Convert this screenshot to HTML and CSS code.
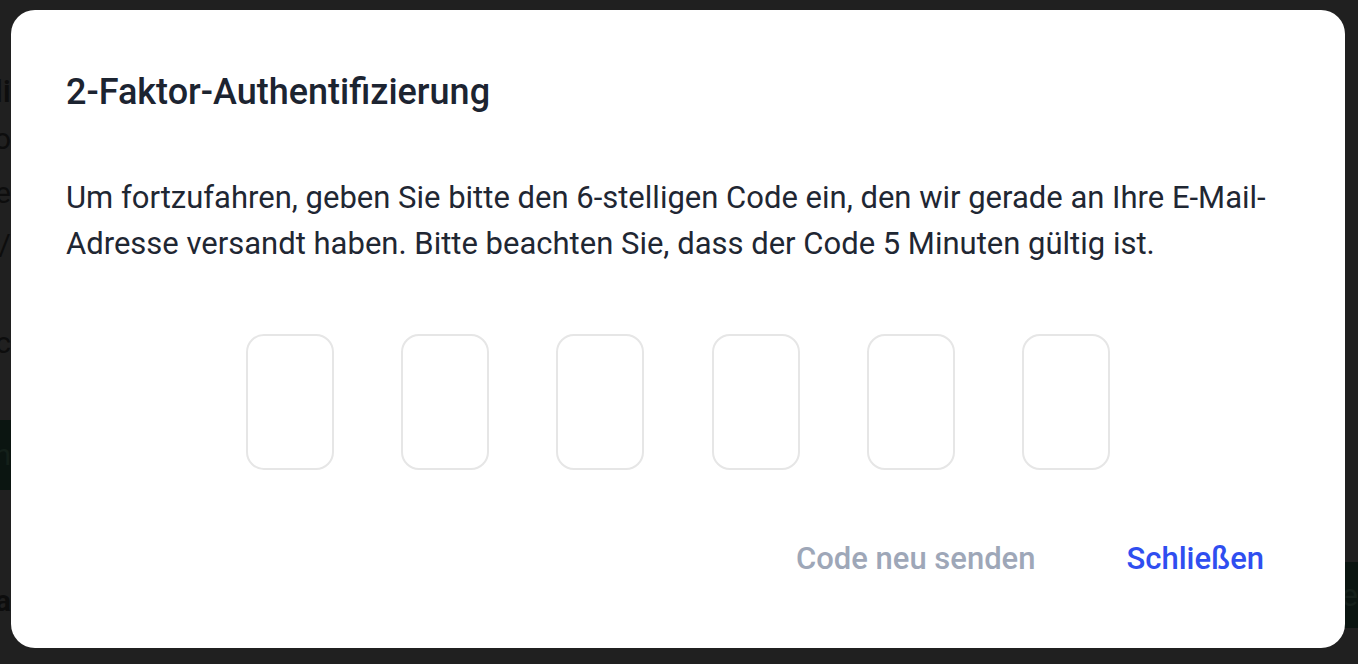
FILE: index.html
```html
<!DOCTYPE html>
<html lang="de">
<head>
<meta charset="utf-8">
<title>2-Faktor-Authentifizierung</title>
<link rel="stylesheet" href="styles.css">
</head>
<body>
<div class="backdrop-page" aria-hidden="true">
  <div class="bg-line bg-title">Anmeldung li</div>
  <div class="bg-line bg-l2">Passwort o</div>
  <div class="bg-line bg-l3">Name e</div>
  <div class="bg-line bg-l4">Pr/</div>
  <div class="bg-line bg-l5">Kontc</div>
  <div class="bg-btn">Anmelden</div>
  <div class="bg-line bg-l6">Fra</div>
</div>
<div class="bg-right" aria-hidden="true"><span>e</span></div>
<div class="overlay">
  <div class="modal" role="dialog" aria-labelledby="mtitle">
    <h2 class="modal-title" id="mtitle">2-Faktor-Authentifizierung</h2>
    <p class="modal-text">Um fortzufahren, geben Sie bitte den 6-stelligen Code ein, den wir gerade an Ihre E-Mail-Adresse versandt haben. Bitte beachten Sie, dass der Code 5 Minuten gültig ist.</p>
    <div class="code-row">
      <input class="code-box" type="text" maxlength="1" aria-label="Ziffer 1">
      <input class="code-box" type="text" maxlength="1" aria-label="Ziffer 2">
      <input class="code-box" type="text" maxlength="1" aria-label="Ziffer 3">
      <input class="code-box" type="text" maxlength="1" aria-label="Ziffer 4">
      <input class="code-box" type="text" maxlength="1" aria-label="Ziffer 5">
      <input class="code-box" type="text" maxlength="1" aria-label="Ziffer 6">
    </div>
    <div class="modal-actions">
      <button class="btn btn-muted" type="button">Code neu senden</button>
      <button class="btn btn-primary" type="button">Schließen</button>
    </div>
  </div>
</div>
</body>
</html>
```
FILE: styles.css
```css
* { box-sizing: border-box; }
html, body {
  margin: 0;
  padding: 0;
  width: 1358px;
  height: 664px;
  overflow: hidden;
  background: #202020;
  font-family: Roboto, "Liberation Sans", sans-serif;
}
body { position: relative; }

.backdrop-page {
  width: 300px;
  margin-left: -289px;
  text-align: right;
  color: #0d0d0d;
  font-size: 30px;
  padding-top: 74px;
}
.bg-line { line-height: 34px; white-space: nowrap; }
.bg-title { font-weight: 500; font-size: 32px; height: 48px; }
.bg-l2 { height: 54px; }
.bg-l3 { height: 52px; }
.bg-l4 { height: 98px; }
.bg-l5 { height: 48px; }
.bg-btn {
  margin-top: 46px;
  height: 70px;
  background: #0b1511;
  color: #14201a;
  line-height: 70px;
}
.bg-l6 { margin-top: 94px; font-weight: 700; }

.bg-right {
  position: absolute;
  right: 0;
  top: 562px;
  width: 40px;
  height: 66px;
  background: #0b1511;
  color: #15201b;
  font-size: 32px;
  line-height: 66px;
  text-align: right;
}

.overlay {
  position: absolute;
  inset: 0;
  padding: 10px 13px 16px 11px;
}
.modal {
  background: #ffffff;
  border-radius: 24px;
  height: 638px;
  padding: 60px 81px 0 55px;
  display: flex;
  flex-direction: column;
}
.modal-title {
  margin: 0;
  font-size: 36px;
  line-height: 44px;
  font-weight: 500;
  color: #1c2431;
}
.modal-text {
  margin: 61px -30px 0 0;
  font-size: 31px;
  line-height: 46px;
  font-weight: 400;
  color: #1f2733;
}
.code-row {
  margin-top: 67px;
  margin-right: -26px;
  display: flex;
  justify-content: center;
  gap: 67.4px;
}
.code-box {
  width: 88px;
  height: 136px;
  border: 2px solid #e6e6e6;
  border-radius: 18px;
  background: #fff;
  outline: none;
  padding: 0;
  font: inherit;
}
.modal-actions {
  margin-top: 69px;
  display: flex;
  justify-content: flex-end;
  gap: 91px;
}
.btn {
  border: 0;
  background: none;
  padding: 0;
  font-family: Roboto, "Liberation Sans", sans-serif;
  font-size: 31px;
  line-height: 40px;
  font-weight: 500;
  cursor: pointer;
}
.btn-muted { color: #9ea7b8; }
.btn-primary { color: #2f4ef0; }
```
